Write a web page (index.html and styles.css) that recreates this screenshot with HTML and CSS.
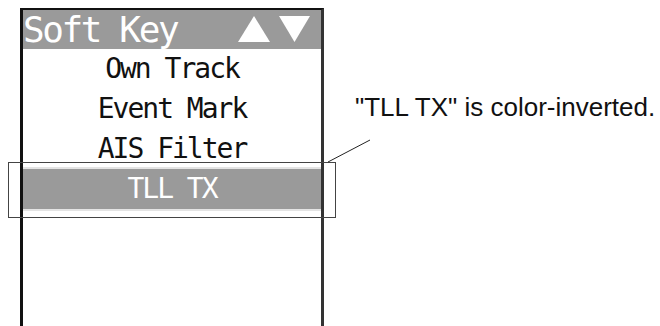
FILE: index.html
```html
<!DOCTYPE html>
<html>
	<head>
		<meta charset="UTF-8">
		<title>Soft Key</title>
		<link rel="stylesheet" href="styles.css">
	</head>
	<body>
		<div class="sheet">
			<div class="lcd">
				<div class="lcd-head">
					<span class="lcd-title">Soft Key</span>
					<svg class="arrows" width="72" height="27" viewBox="0 0 72 27">
						<polygon points="0,26 16,0 32,26" fill="#fff"/>
						<polygon points="41,0 72,0 56.5,26" fill="#fff"/>
					</svg>
				</div>
				<ul class="menu">
					<li>Own Track</li>
					<li>Event Mark</li>
					<li>AIS Filter</li>
					<li class="sel">TLL TX</li>
				</ul>
			</div>

			<!-- callout -->
			<div class="mark-box"></div>
			<svg class="leader" width="50" height="30" viewBox="0 0 50 30">
				<line x1="0" y1="24" x2="42" y2="2" stroke="#222" stroke-width="1"/>
			</svg>
			<p class="note">"TLL TX" is color-inverted.</p>
		</div>
	</body>
</html>
```

FILE: styles.css
```css
*{
	margin: 0;
	padding: 0;
}
html, body{
	background: #fff;
	overflow: hidden;
}
.sheet{
	position: relative;
	width: 660px;
	height: 326px;
	padding: 8px 0 0 20px;
	box-sizing: border-box;
}
.lcd{
	width: 298px;
	height: 330px;
	border: 3px solid #111;
	border-top-width: 2px;
	border-right-color: #333;
	border-bottom: none;
	font-family: "DejaVu Sans Mono", monospace;
}
.lcd-head{
	display: flex;
	justify-content: space-between;
	align-items: center;
	height: 39px;
	padding: 0 11px 0 0;
	background: #9a9a9a;
	color: #fff;
}
.lcd-title{
	font-size: 36px;
	line-height: 39px;
	letter-spacing: -2.4px;
	white-space: pre;
}
.arrows{
	display: block;
}
.menu{
	list-style: none;
}
.menu li{
	height: 40px;
	line-height: 40px;
	font-size: 28px;
	letter-spacing: -2px;
	text-align: center;
	color: #111;
	white-space: pre;
}
.menu li.sel{
	background: #9a9a9a;
	color: #fff;
	box-shadow: 0 -2px 0 #e4e4e4, 0 2px 0 #e4e4e4;
}
.mark-box{
	position: absolute;
	left: 8px;
	top: 162px;
	width: 326px;
	height: 54px;
	border: 1px solid #444;
}
.leader{
	position: absolute;
	left: 328px;
	top: 138px;
}
.note{
	position: absolute;
	left: 355px;
	top: 94px;
	font-family: "Liberation Sans", Arial, sans-serif;
	font-size: 26px;
	line-height: 26px;
	color: #111;
	white-space: nowrap;
}
```
